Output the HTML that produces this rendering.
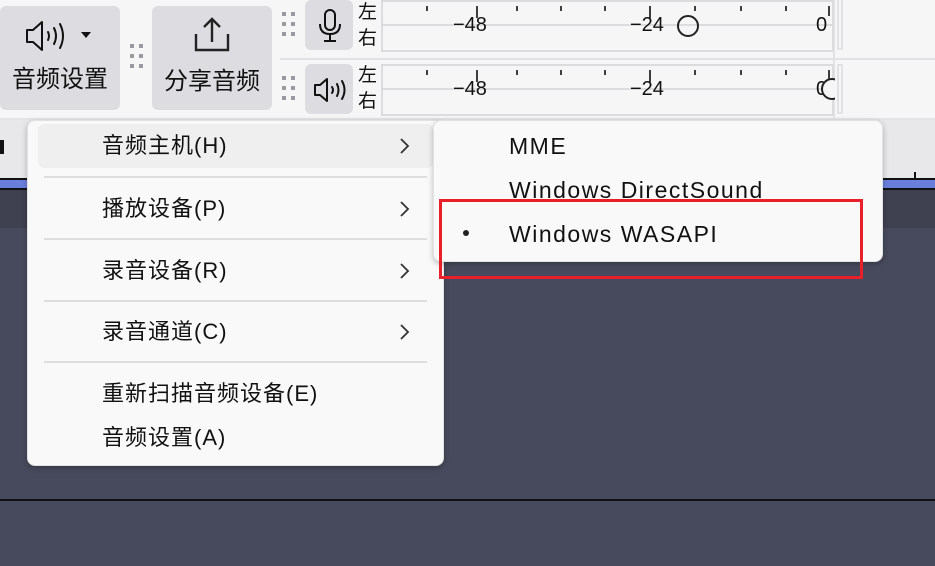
<!DOCTYPE html>
<html><head><meta charset="utf-8"><style>
*{margin:0;padding:0;box-sizing:border-box}
body{width:935px;height:566px;overflow:hidden;position:relative;background:#474a5c;font-family:"Liberation Sans","Noto Sans CJK SC",sans-serif;color:#111}
.abs{position:absolute}
.btn{position:absolute;background:#dddde1;border-radius:6px}
.grip{position:absolute;width:14px}
.grip i{position:absolute;width:4px;height:4px;background:#9a9aa3}
.menu{position:absolute;background:#f9f9f9;border-radius:8px;box-shadow:0 2px 6px rgba(0,0,0,.25);border:1px solid #e2e2e2}
.it{position:absolute;font-size:22px;letter-spacing:1px;line-height:28px;white-space:nowrap}
.en{font-size:23px;letter-spacing:1.5px}
.sep{position:absolute;height:2px;background:#dedede}
</style></head><body>
<div class="abs" style="left:0;top:0;width:935px;height:120px;background:#f6f6f6;border-bottom:2px solid #e4e4e6"></div>
<div class="abs" style="left:0;top:120px;width:935px;height:60px;background:#e8e8ea"></div>
<div class="abs" style="left:0;top:178px;width:935px;height:2px;background:#111"></div>
<div class="abs" style="left:0;top:180px;width:935px;height:8px;background:#6a7fdc"></div>
<div class="abs" style="left:0;top:188px;width:935px;height:2px;background:#111"></div>
<div class="abs" style="left:0;top:190px;width:935px;height:38px;background:#3f4050"></div>
<div class="abs" style="left:0;top:499px;width:935px;height:2px;background:#111"></div>
<div class="abs" style="left:0;top:140px;width:4px;height:14px;background:#111"></div>
<div class="abs" style="left:914px;top:172px;width:2px;height:8px;background:#111"></div>

<div class="btn" style="left:0;top:6px;width:120px;height:104px"></div>
<svg class="abs" style="left:24px;top:18px" width="76" height="36" viewBox="0 0 76 36">
<path d="M3 12h6l9-8v28l-9-8H3z" fill="none" stroke="#111" stroke-width="2" stroke-linejoin="round"/>
<path d="M24 14q2 4 0 8M30 10q4 8 0 16M36 6q6 12 0 24" fill="none" stroke="#111" stroke-width="2" stroke-linecap="round"/>
<path d="M57 14h10l-5 6z" fill="#111"/></svg>
<div class="it" style="left:12px;top:66px;font-size:24px;letter-spacing:0">音频设置</div>
<div class="grip" style="left:130px;top:44px"><i style="left:0;top:0"></i><i style="left:9px;top:0"></i><i style="left:0;top:10px"></i><i style="left:9px;top:10px"></i><i style="left:0;top:20px"></i><i style="left:9px;top:20px"></i></div>
<div class="btn" style="left:152px;top:6px;width:120px;height:104px"></div>
<svg class="abs" style="left:192px;top:16px" width="40" height="38" viewBox="0 0 40 38">
<path d="M4 18v16h32V18" fill="none" stroke="#222" stroke-width="2.4"/>
<path d="M20 26V4M12 11l8-8 8 8" fill="none" stroke="#222" stroke-width="2.4"/></svg>
<div class="it" style="left:164px;top:68px;font-size:24px;letter-spacing:0">分享音频</div>

<div class="grip" style="left:282px;top:12px"><i style="left:0;top:0"></i><i style="left:9px;top:0"></i><i style="left:0;top:10px"></i><i style="left:9px;top:10px"></i><i style="left:0;top:20px"></i><i style="left:9px;top:20px"></i></div>
<div class="grip" style="left:282px;top:76px"><i style="left:0;top:0"></i><i style="left:9px;top:0"></i><i style="left:0;top:10px"></i><i style="left:9px;top:10px"></i><i style="left:0;top:20px"></i><i style="left:9px;top:20px"></i></div>
<div class="btn" style="left:305px;top:0;width:48px;height:50px"></div>
<svg class="abs" style="left:315px;top:8px" width="30" height="36" viewBox="0 0 30 36">
<rect x="10" y="2" width="10" height="20" rx="5" fill="none" stroke="#111" stroke-width="2"/>
<path d="M5 16q0 10 10 10t10-10M15 26v6M9 33h12" fill="none" stroke="#111" stroke-width="2"/></svg>
<div class="btn" style="left:305px;top:64px;width:48px;height:50px"></div>
<svg class="abs" style="left:313px;top:76px" width="36" height="28" viewBox="0 0 36 28">
<path d="M2 9h5l7-6v22l-7-6H2z" fill="none" stroke="#111" stroke-width="2" stroke-linejoin="round"/>
<path d="M19 11q2 3 0 6M24 8q3 6 0 12M29 5q5 9 0 18" fill="none" stroke="#111" stroke-width="2" stroke-linecap="round"/></svg>
<div class="abs" style="left:280px;top:58px;width:560px;height:2px;background:#e2e2e4"></div>
<div class="abs" style="left:833px;top:0;width:2px;height:120px;background:#e2e2e4"></div>
<div class="abs" style="left:840px;top:58px;width:95px;height:2px;background:#e2e2e4"></div>
<div class="abs" style="left:837px;top:0;width:6px;height:50px;border:2px solid #e2e2e4;border-top:none"></div>
<div class="abs" style="left:837px;top:64px;width:6px;height:50px;border:2px solid #e2e2e4"></div>

<div class="it" style="left:358px;top:0;font-size:19px;letter-spacing:0;line-height:26px">左<br>右</div>
<div class="it" style="left:358px;top:63px;font-size:19px;letter-spacing:0;line-height:26px">左<br>右</div>

<svg class="abs" style="left:380px;top:0" width="455" height="118" viewBox="0 0 455 118">
<g fill="none" stroke="#dcdcde" stroke-width="2">
<rect x="2" y="1" width="451" height="50"/><line x1="2" y1="25" x2="453" y2="25"/>
<rect x="2" y="65" width="451" height="50"/><line x1="2" y1="89" x2="453" y2="89"/></g>
<g stroke="#111" stroke-width="1.6">
<path d="M47 6v5M97 6v12M137 6v5M181 6v5M225 6v5M270 6v12M315 6v5M361 6v5M406 6v5M449 6v10"/>
<path d="M47 70v5M97 70v12M137 70v5M181 70v5M225 70v5M270 70v12M315 70v5M361 70v5M406 70v5M449 70v10"/>
</g>
<g font-size="20" fill="#111" font-family="Liberation Sans,sans-serif">
<text x="73" y="31">−48</text><text x="250" y="31">−24</text><text x="436" y="31">0</text>
<text x="73" y="95">−48</text><text x="250" y="95">−24</text><text x="436" y="95">0</text></g>
<circle cx="308" cy="26" r="10" fill="none" stroke="#222" stroke-width="2"/>
<circle cx="452" cy="89" r="10" fill="#f6f6f6" stroke="#222" stroke-width="2"/>
</svg>

<div class="menu" style="left:27px;top:120px;width:417px;height:346px"></div>
<div class="abs" style="left:38px;top:124px;width:395px;height:44px;background:#efefef;border-radius:6px"></div>
<div class="sep" style="left:44px;top:176px;width:383px"></div>
<div class="sep" style="left:44px;top:238px;width:383px"></div>
<div class="sep" style="left:44px;top:300px;width:383px"></div>
<div class="sep" style="left:44px;top:361px;width:383px"></div>
<div class="it" style="left:102px;top:132px">音频主机(H)</div>
<div class="it" style="left:102px;top:195px">播放设备(P)</div>
<div class="it" style="left:102px;top:257px">录音设备(R)</div>
<div class="it" style="left:102px;top:318px">录音通道(C)</div>
<div class="it" style="left:102px;top:380px">重新扫描音频设备(E)</div>
<div class="it" style="left:102px;top:424px">音频设置(A)</div>
<svg class="abs" style="left:398px;top:137px" width="14" height="220" viewBox="0 0 14 220">
<g fill="none" stroke="#333" stroke-width="1.8"><path d="M3 2l7 7-7 7"/><path d="M3 65l7 7-7 7"/><path d="M3 127l7 7-7 7"/><path d="M3 188l7 7-7 7"/></g></svg>

<div class="menu" style="left:433px;top:120px;width:450px;height:142px"></div>
<div class="it en" style="left:509px;top:132px">MME</div>
<div class="it en" style="left:509px;top:176px">Windows DirectSound</div>
<div class="it en" style="left:509px;top:220px">Windows WASAPI</div>
<div class="abs" style="left:463px;top:230px;width:6px;height:6px;border-radius:50%;background:#222"></div>

<div class="abs" style="left:439px;top:199px;width:424px;height:80px;border:3px solid #e8202a"></div>
</body></html>
